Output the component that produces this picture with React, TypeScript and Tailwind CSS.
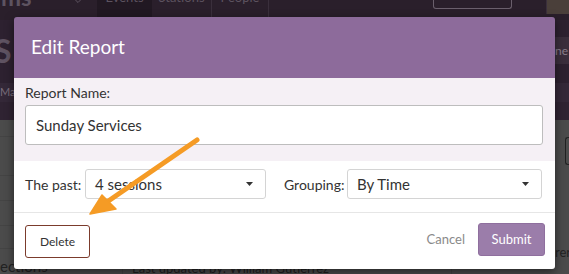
import { ChevronDown } from "lucide-react";

const font = { fontFamily: "Lato, 'Open Sans', sans-serif" };

function Caret() {
  return (
    <svg width="7" height="4" viewBox="0 0 7 4" className="shrink-0">
      <path d="M0 0 H7 L3.5 4 Z" fill="#333" />
    </svg>
  );
}

function Select({ value, width }: { value: string; width: string }) {
  return (
    <div
      className={`${width} h-[30px] bg-white border border-[#d4d4d4] rounded-[3px] flex items-center justify-between pl-[9px] pr-[12px] text-[15px] text-[#333]`}
    >
      <span>{value}</span>
      <Caret />
    </div>
  );
}

// page behind the dialog, already dimmed by the backdrop
function Backdrop() {
  return (
    <div className="w-full h-full flex flex-col">
      <div className="h-[20px] shrink-0 bg-[#2a1f2b] flex overflow-hidden">
        <div className="w-[72px] text-[24px] font-bold text-[#5d5360] leading-none -mt-[15px] pl-[1px]">ms</div>
        <ChevronDown size={12} className="text-[#5d5360] -mt-[5px]" />
        <div className="ml-[13px] flex h-full text-[13px] text-[#5d5360] leading-none">
          <div className="w-[55px] bg-[#211822] flex justify-center items-start"><span className="-mt-[9px]">Events</span></div>
          <div className="w-[60px] border-r border-[#3a2f3c] flex justify-center items-start"><span className="-mt-[9px]">Stations</span></div>
          <div className="w-[57px] border-r border-[#3a2f3c] flex justify-center items-start"><span className="-mt-[9px]">People</span></div>
        </div>
        <div className="ml-auto w-[79px] h-[9px] border border-t-0 border-[#6a5f6c] rounded-b-[3px] mr-[34px]" />
        <div className="w-[23px] h-[14px] bg-[#4a3f3a] border-l border-[#3a2f3c]" />
      </div>
      <div className="h-[18px] bg-[#2d2130]" />
      <div className="h-[27px] bg-[#2d2130] flex items-center justify-between">
        <span className="text-[32px] text-[#5f5362] leading-none -ml-[6px] font-bold">S</span>
        <span className="w-[14px] h-full bg-[#3a2e3c] text-[12px] text-[#8a7f8c] flex items-center">ne</span>
      </div>
      <div className="h-[20px] bg-[#2d2130]" />
      <div className="h-[20px] bg-[#342838] flex items-center text-[11px] text-[#7a6f7c]">May</div>
      <div className="h-[19px] bg-[#2f2332]" />
      <div className="flex-1 bg-[#4b4b4b] flex">
        <div className="w-[123px] flex flex-col border-r border-[#424242]">
          <div className="h-[17px] border-b border-[#444]" />
          <div className="h-[39px] border-b border-[#444]" />
          <div className="h-[25px] border-b border-[#444]" />
          <div className="h-[25px] border-b border-[#444]" />
          <div className="h-[23px] border-b border-[#444]" />
          <div className="text-[15px] text-[#222] leading-none pt-[10px]">ections</div>
        </div>
        <div className="w-[329px] border-r border-[#424242] flex flex-col justify-end pl-[9px]">
          <div className="text-[13px] text-[#1f1f1f] leading-none mb-[-1px]">Last updated by: William Gutierrez</div>
        </div>
        <div className="flex-1 flex flex-col items-end">
          <div className="mt-[17px] w-[4px] h-[28px] border border-r-0 border-[#222] rounded-l-[3px]" />
          <div className="mt-[78px] text-[13px] text-[#222] w-[14px] overflow-hidden">rer</div>
        </div>
      </div>
    </div>
  );
}

export default function App() {
  return (
    <div className="relative w-[569px] h-[274px] overflow-hidden bg-[#4b4b4b]" style={font}>
      <Backdrop />

      <div className="absolute left-[14px] top-[17px] w-[541px] rounded-[3px] overflow-hidden shadow-[0_3px_10px_rgba(0,0,0,0.5)]">
        <div className="h-[61px] bg-[#8d6b9b] flex items-center px-[17px] text-white text-[19px]">
          Edit Report
        </div>

        <div className="bg-[#f5f0f5] pl-[11px] pr-[12px] pt-[5px] pb-[16px]">
          <div className="text-[14px] leading-5 text-[#333] mb-[2px]">Report Name:</div>
          <div className="h-[40px] bg-white border border-[#bdbdbd] rounded-[3px] flex items-center pl-[10px] text-[15px] text-[#333]">
            Sunday Services
          </div>
        </div>

        <div className="bg-white pl-[11px] pt-[8px] pb-[13px] flex items-center border-b border-[#e6e6e6]">
          <div className="w-[60px] text-[14px] text-[#333]">The past:</div>
          <Select value="4 sessions" width="w-[181px]" />
          <div className="ml-[18px] w-[63px] text-[14px] text-[#333]">Grouping:</div>
          <Select value="By Time" width="w-[195px]" />
        </div>

        <div className="bg-white pl-[11px] pr-[10px] pt-[10px] pb-[11px] flex items-start">
          <button className="mt-[2px] w-[65px] h-[33px] border border-[#7b3b2c] rounded-[3px] text-[12px] text-[#333]">
            Delete
          </button>
          <button className="ml-auto h-[33px] px-[13px] text-[13px] text-[#8a8a8a]">Cancel</button>
          <button className="w-[67px] h-[33px] bg-[#9b7daa] border border-[#8f6f9e] rounded-[3px] text-[13px] text-white">
            Submit
          </button>
        </div>
      </div>

      <svg className="absolute left-0 top-0 pointer-events-none" width="569" height="274">
        <line x1="197" y1="140" x2="104" y2="204" stroke="#f59b25" strokeWidth="5" strokeLinecap="round" />
        <polygon points="90,214 102,195 116,209" fill="#f59b25" stroke="#f59b25" strokeWidth="1.5" strokeLinejoin="round" />
      </svg>
    </div>
  );
}
